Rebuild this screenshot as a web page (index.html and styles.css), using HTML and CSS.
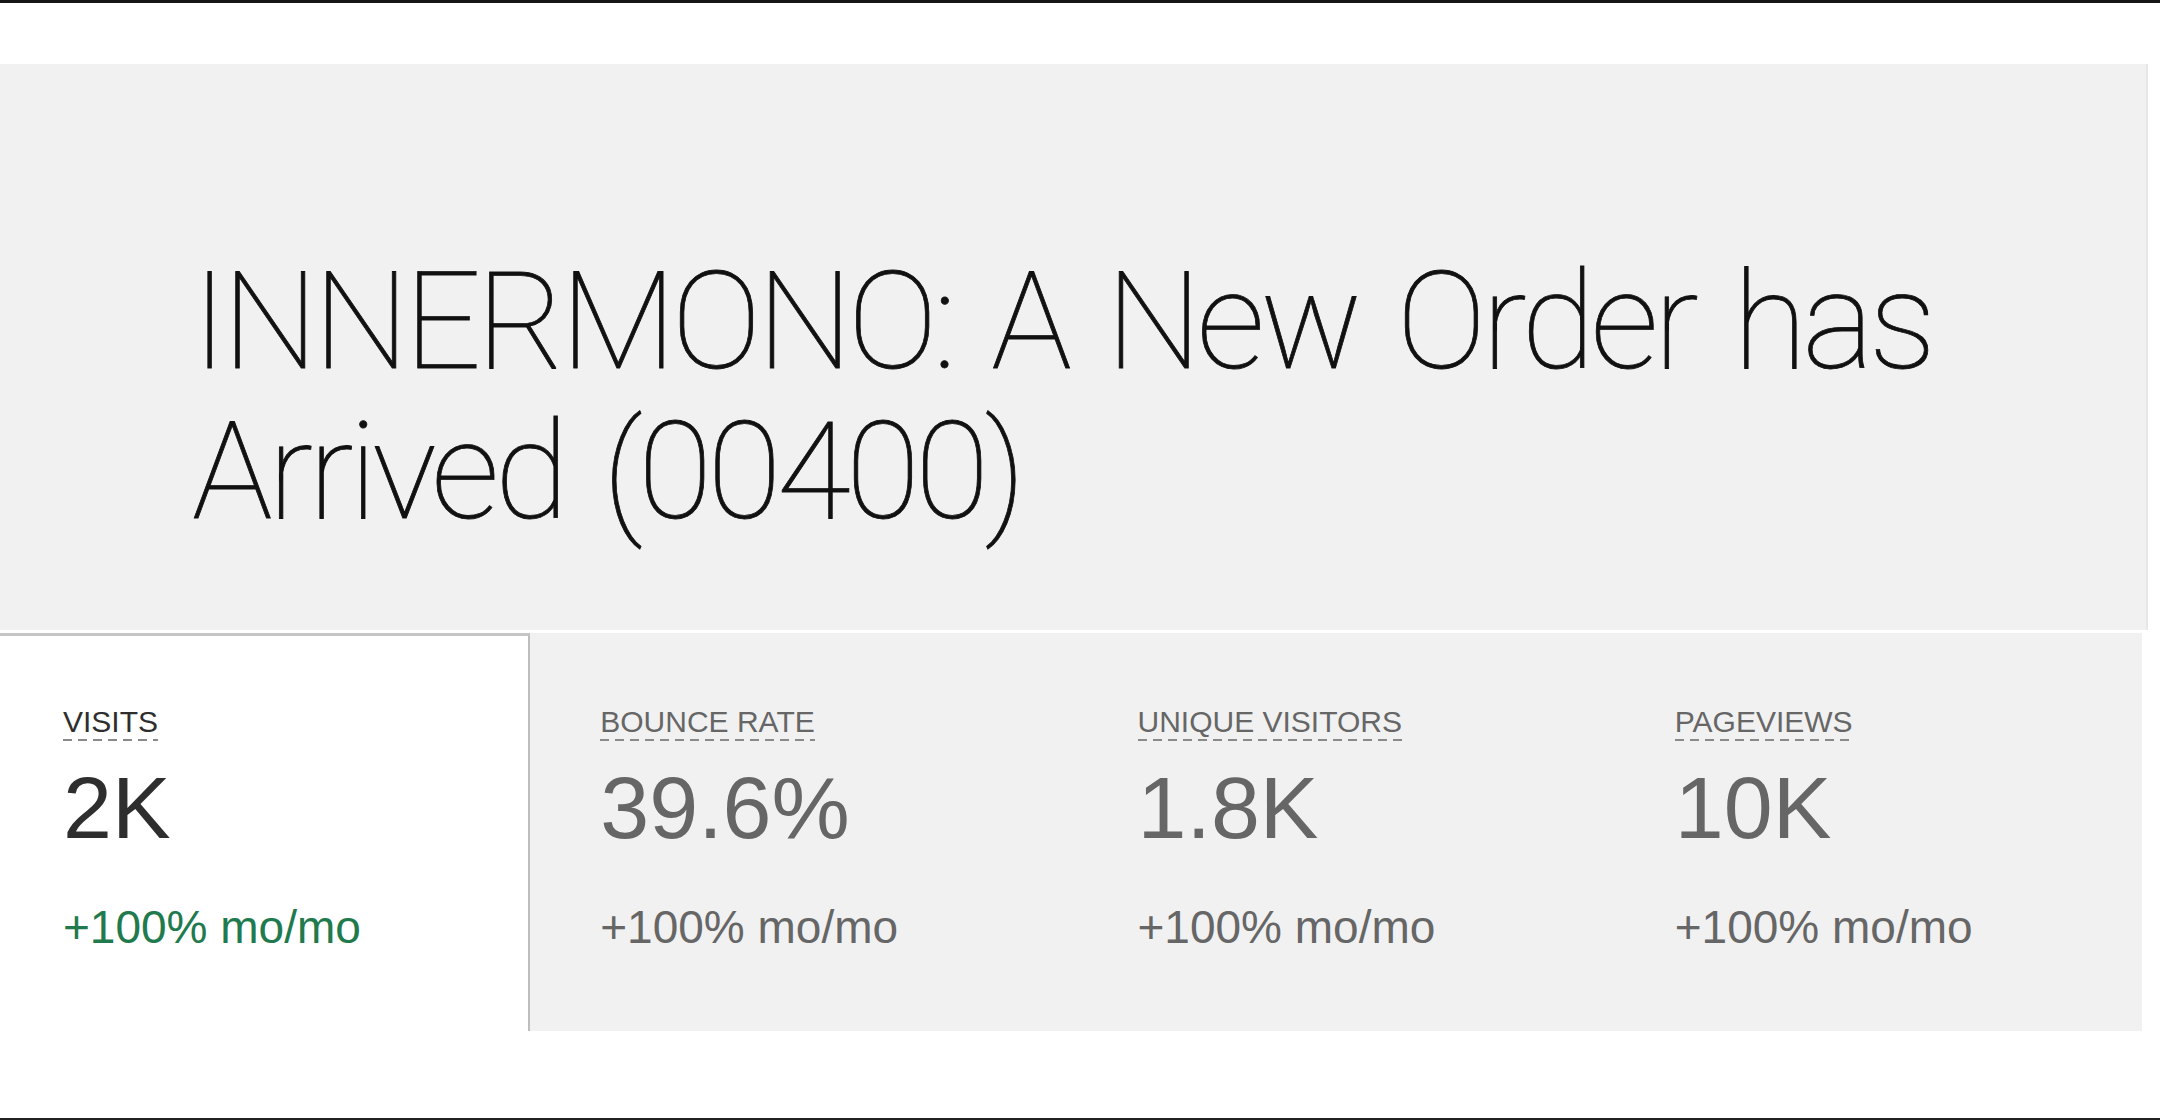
FILE: index.html
```html
<!DOCTYPE html>
<html lang="en">
<head>
<meta charset="utf-8">
<title>INNERMONO</title>
<link rel="stylesheet" href="styles.css">
</head>
<body>
<div class="page">
  <section class="hero">
    <h1 class="hero-title">INNERMONO: A New Order has<br>Arrived (00400)</h1>
  </section>
  <section class="stats">
    <div class="stat stat-active">
      <span class="stat-label">VISITS</span>
      <div class="stat-value">2K</div>
      <div class="stat-change">+100% mo/mo</div>
    </div>
    <div class="stat">
      <span class="stat-label">BOUNCE RATE</span>
      <div class="stat-value">39.6%</div>
      <div class="stat-change">+100% mo/mo</div>
    </div>
    <div class="stat">
      <span class="stat-label">UNIQUE VISITORS</span>
      <div class="stat-value">1.8K</div>
      <div class="stat-change">+100% mo/mo</div>
    </div>
    <div class="stat">
      <span class="stat-label">PAGEVIEWS</span>
      <div class="stat-value">10K</div>
      <div class="stat-change">+100% mo/mo</div>
    </div>
  </section>
</div>
</body>
</html>
```
FILE: styles.css
```css
html, body {
  margin: 0;
  padding: 0;
  background: #ffffff;
}

.page {
  box-sizing: border-box;
  height: 1120px;
  border-top: 3px solid #151515;
  border-bottom: 2px solid #222222;
  padding-top: 61px;
  display: flex;
  flex-direction: column;
  gap: 3px;
  font-family: "Liberation Sans", Arial, sans-serif;
}

.hero {
  box-sizing: border-box;
  width: 2148px;
  height: 566px;
  background: #f1f1f1;
  padding: 183px 0 0 192px;
  box-shadow: inset -2px 0 0 #e7e7e7;
}

.hero-title {
  margin: 0;
  font-family: Roboto, "Liberation Sans", sans-serif;
  font-weight: 100;
  font-size: 135px;
  line-height: 150px;
  color: #111111;
  letter-spacing: -4.6px;
  word-spacing: 11px;
  -webkit-text-stroke: 0.8px #111111;
}

.stats {
  width: 2142px;
  height: 398px;
  background: #f1f1f1;
  display: grid;
  grid-template-columns: repeat(4, 1fr);
  column-gap: 7px;
}

.stat {
  box-sizing: border-box;
  border-top: 3px solid transparent;
  border-right: 2px solid transparent;
  padding: 71px 0 0 63px;
  color: #666666;
}

.stat-active {
  background: #ffffff;
  border-top-color: #c6c6c6;
  border-right-color: #bdbdbd;
  color: #2e2e2e;
}

.stat-label {
  display: inline-block;
  font-size: 30px;
  line-height: 30px;
  padding-bottom: 4px;
  background-image: repeating-linear-gradient(to right, #8a8a8a 0 9px, transparent 9px 15px);
  background-size: 100% 2px;
  background-position: left bottom;
  background-repeat: no-repeat;
}

.stat-value {
  margin-top: 23px;
  font-size: 88px;
  line-height: 88px;
}

.stat-change {
  margin-top: 52px;
  font-size: 46px;
  line-height: 46px;
}

.stat-active .stat-change {
  color: #207a4d;
}
```
